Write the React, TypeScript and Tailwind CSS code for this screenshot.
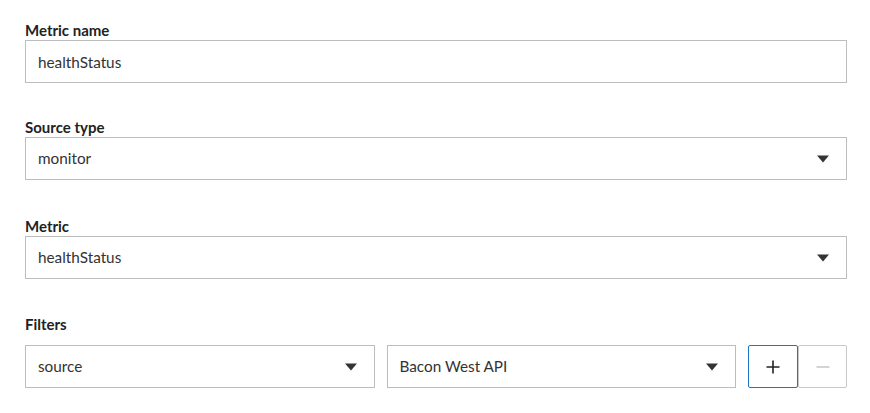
import { useState } from 'react';

function Caret() {
  return (
    <svg width="12" height="8" viewBox="0 0 12 8" className="shrink-0">
      <path d="M0 0.5 H12 L6 7.5 Z" fill="#333" />
    </svg>
  );
}

function Label({ children, className = '' }: { children: string; className?: string }) {
  return <div className={`text-[15px] leading-5 font-bold text-[#222] ${className}`}>{children}</div>;
}

function SelectBox({ value }: { value: string }) {
  return (
    <div className="flex items-center justify-between h-[43px] border border-[#bdbdbd] bg-white pl-[12px] pr-[17px] text-[15.3px] text-[#333]">
      <span>{value}</span>
      <Caret />
    </div>
  );
}

export default function App() {
  const [name, setName] = useState('healthStatus');

  return (
    <div className="bg-white min-h-[413px] pl-[25px] pr-[23px] pt-[20px]" style={{ fontFamily: 'Lato, "Open Sans", sans-serif' }}>
      {/* Metric name */}
      <div>
        <Label>Metric name</Label>
        <input
          value={name}
          onChange={(e) => setName(e.target.value)}
          className="block w-full h-[43px] border border-[#bdbdbd] px-[12px] text-[15.3px] text-[#333] outline-none"
        />
      </div>

      <div className="mt-[34px]">
        <Label>Source type</Label>
        <SelectBox value="monitor" />
      </div>

      <div className="mt-[36px]">
        <Label>Metric</Label>
        <SelectBox value="healthStatus" />
      </div>

      <div className="mt-[35px]">
        <Label className="mb-[11px]">Filters</Label>
        <div className="flex items-center gap-[12px]">
          <div className="flex-1">
            <SelectBox value="source" />
          </div>
          <div className="flex-1">
            <SelectBox value="Bacon West API" />
          </div>
          <div className="flex">
            <button className="w-[50px] h-[43px] flex items-center justify-center border border-[#1a76c6] rounded-[2px] bg-white text-[#222]">
              <svg width="14" height="14" viewBox="0 0 14 14">
                <path d="M7 0.5 V13.5 M0.5 7 H13.5" stroke="#222" strokeWidth="1.6" />
              </svg>
            </button>
            <button className="w-[49px] h-[43px] flex items-center justify-center border border-[#c8c8c8] rounded-[2px] bg-white">
              <svg width="14" height="14" viewBox="0 0 14 14">
                <path d="M0.5 7 H13.5" stroke="#c8c8c8" strokeWidth="1.6" />
              </svg>
            </button>
          </div>
        </div>
      </div>
    </div>
  );
}
